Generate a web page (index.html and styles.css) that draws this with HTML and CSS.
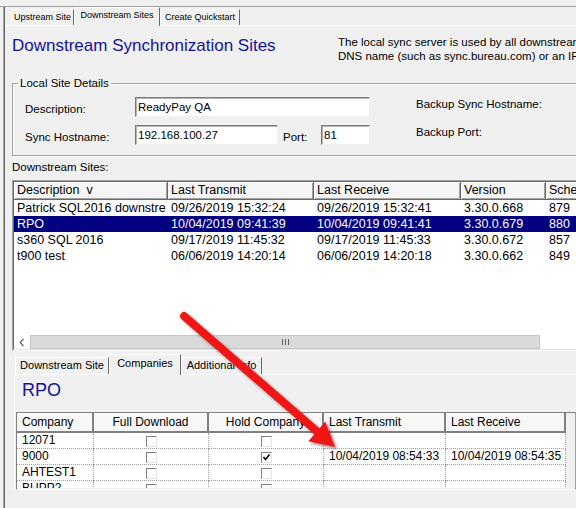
FILE: index.html
```html
<!DOCTYPE html>
<html>
<head>
<meta charset="utf-8">
<link rel="stylesheet" href="styles.css">
</head>
<body>
<div class="app">
  <div class="topline"></div>
  <div class="frame"><div class="frame-inner">
    <div class="tabstrip">
      <div class="tab t-up">Upstream Site</div>
      <div class="tab sel t-down">Downstream Sites</div>
      <div class="tab t-create">Create Quickstart</div>
    </div>
    <div class="page">
      <div class="hdr">
        <h1 class="title">Downstream Synchronization Sites</h1>
        <p class="info">The local sync server is used by all downstream<br>DNS name (such as sync.bureau.com) or an IP</p>
      </div>
      <fieldset class="group">
        <legend class="legend">Local Site Details</legend>
        <div class="frow">
          <span class="flabel">Description:</span>
          <span class="input w-desc">ReadyPay QA</span>
          <span class="blabel">Backup Sync Hostname:</span>
        </div>
        <div class="frow">
          <span class="flabel">Sync Hostname:</span>
          <span class="input w-host">192.168.100.27</span>
          <span class="flabel plabel">Port:</span>
          <span class="input w-port">81</span>
          <span class="blabel">Backup Port:</span>
        </div>
      </fieldset>
      <div class="slabel">Downstream Sites:</div>
      <div class="lv"><div class="lv-in">
        <div class="lv-row lv-head">
          <div class="c c1">Description&nbsp; v</div>
          <div class="c c2">Last Transmit</div>
          <div class="c c3">Last Receive</div>
          <div class="c c4">Version</div>
          <div class="c c5">Sche</div>
        </div>
        <div class="lv-body">
          <div class="lv-row">
            <div class="c c1">Patrick SQL2016 downstre</div>
            <div class="c c2">09/26/2019 15:32:24</div>
            <div class="c c3">09/26/2019 15:32:41</div>
            <div class="c c4">3.30.0.668</div>
            <div class="c c5">879</div>
          </div>
          <div class="lv-row sel">
            <div class="c c1">RPO</div>
            <div class="c c2">10/04/2019 09:41:39</div>
            <div class="c c3">10/04/2019 09:41:41</div>
            <div class="c c4">3.30.0.679</div>
            <div class="c c5">880</div>
          </div>
          <div class="lv-row">
            <div class="c c1">s360 SQL 2016</div>
            <div class="c c2">09/17/2019 11:45:32</div>
            <div class="c c3">09/17/2019 11:45:33</div>
            <div class="c c4">3.30.0.672</div>
            <div class="c c5">857</div>
          </div>
          <div class="lv-row">
            <div class="c c1">t900 test</div>
            <div class="c c2">06/06/2019 14:20:14</div>
            <div class="c c3">06/06/2019 14:20:18</div>
            <div class="c c4">3.30.0.662</div>
            <div class="c c5">849</div>
          </div>
        </div>
        <div class="hscroll">
          <div class="sb-btn"><svg width="6" height="9" viewBox="0 0 6 9"><path d="M4.5 1 L1.2 4.5 L4.5 8" fill="none" stroke="#606060" stroke-width="1.2"/></svg></div>
          <div class="sb-thumb"><svg width="7" height="6" viewBox="0 0 7 6"><rect x="0" y="0" width="1" height="6" fill="#606060"/><rect x="3" y="0" width="1" height="6" fill="#606060"/><rect x="6" y="0" width="1" height="6" fill="#606060"/></svg></div>
        </div>
      </div></div>
      <div class="subtabs">
        <div class="stab s1">Downstream Site</div>
        <div class="stab sel s2">Companies</div>
        <div class="stab s3">Additional Info</div>
      </div>
      <div class="subpage">
        <div class="rpo">RPO</div>
        <div class="grid">
          <div class="gh">
            <div class="gc g1 hl">Company</div>
            <div class="gc g2 hc">Full Download</div>
            <div class="gc g3 hc">Hold Company</div>
            <div class="gc g4 hl">Last Transmit</div>
            <div class="gc g5 hl">Last Receive</div>
          </div>
          <div class="gbody">
            <div class="gr">
              <div class="gc g1">12071</div>
              <div class="gc g2 cbc"><span class="cb"></span></div>
              <div class="gc g3 cbc"><span class="cb"></span></div>
              <div class="gc g4"></div>
              <div class="gc g5"></div>
            </div>
            <div class="gr">
              <div class="gc g1">9000</div>
              <div class="gc g2 cbc"><span class="cb"></span></div>
              <div class="gc g3 cbc"><span class="cb"><svg width="9" height="9" viewBox="0 0 9 9"><path d="M1.5 4 L3.5 6.5 L7.5 1.5" fill="none" stroke="#000" stroke-width="1.6"/></svg></span></div>
              <div class="gc g4">10/04/2019 08:54:33</div>
              <div class="gc g5">10/04/2019 08:54:35</div>
            </div>
            <div class="gr">
              <div class="gc g1">AHTEST1</div>
              <div class="gc g2 cbc"><span class="cb"></span></div>
              <div class="gc g3 cbc"><span class="cb"></span></div>
              <div class="gc g4"></div>
              <div class="gc g5"></div>
            </div>
            <div class="gr">
              <div class="gc g1">BUPP2</div>
              <div class="gc g2 cbc"><span class="cb"></span></div>
              <div class="gc g3 cbc"><span class="cb"></span></div>
              <div class="gc g4"></div>
              <div class="gc g5"></div>
            </div>
          </div>
        </div>
      </div>
    </div>
  </div></div>
</div>
<svg class="arrow" width="576" height="508" viewBox="0 0 576 508" aria-hidden="true">
  <defs>
    <filter id="sh" x="-20%" y="-20%" width="140%" height="140%">
      <feDropShadow dx="2" dy="2" stdDeviation="1.5" flood-color="#000" flood-opacity="0.45"/>
    </filter>
  </defs>
  <g filter="url(#sh)">
    <line x1="184" y1="316" x2="320" y2="434" stroke="#f01414" stroke-width="8" stroke-linecap="round"/>
    <polygon points="335,447 325.3,421.4 308.3,441.2" fill="#f01414"/>
  </g>
</svg>
</body>
</html>
```

FILE: styles.css
```css
* { box-sizing: border-box; }
html, body { margin: 0; }
body {
  width: 576px;
  height: 508px;
  overflow: hidden;
  background: #f0f0f0;
  font-family: "Liberation Sans", Arial, sans-serif;
  color: #000;
  position: relative;
}
.app { width: 576px; overflow: hidden; }
.topline { height: 7px; border-bottom: 1px solid #a0a0a0; }
.frame { margin-left: 3px; border-left: 1px solid #a0a0a0; height: 501px; }
.frame-inner { border-left: 1px solid #696969; height: 100%; }

.tabstrip { display: flex; align-items: flex-end; height: 18px; padding-left: 6px; }
.tab {
  height: 16px;
  border: 1px solid;
  border-bottom: 0;
  border-color: #fff #696969 #fff #fff;
  font-size: 9px;
  line-height: 14px;
  text-align: center;
  white-space: nowrap;
  background: #f0f0f0;
  flex: none;
}
.tab.sel { height: 19px; margin-bottom: -1px; line-height: 15px; }
.t-up { width: 63px; }
.t-down { width: 86px; }
.t-create { width: 80px; }

.page { border-top: 1px solid #fff; padding: 10px 0 0 7px; width: 675px; }
.hdr { display: grid; grid-template-columns: 326px auto; height: 41px; }
.title {
  margin: 0;
  font-size: 17px;
  line-height: 20px;
  font-weight: normal;
  color: #14149a;
  white-space: nowrap;
}
.info { margin: 0; font-size: 11.5px; line-height: 13.5px; white-space: nowrap; }

.group {
  margin: 0;
  padding: 0 12px 10px 12px;
  border: 1px solid #a0a0a0;
  box-shadow: 1px 1px 0 #fff, inset 1px 1px 0 #fff;
  min-width: 0;
}
.legend { font-size: 11.5px; line-height: 13px; padding: 0 2px; margin-left: -7px; }
.frow { display: flex; height: 20px; margin-top: 7px; }
.frow + .frow { margin-top: 8px; }
.flabel { width: 110px; flex: none; padding-top: 5px; font-size: 11.5px; line-height: 14px; white-space: nowrap; }
.plabel { width: 43px; padding-left: 5px; }
.input {
  height: 20px;
  flex: none;
  border: 1px solid;
  border-color: #7a7a7a #f0f0f0 #f0f0f0 #7a7a7a;
  box-shadow: inset 1px 1px 0 #b4b4b4;
  background: #fff;
  font-size: 11.5px;
  line-height: 18px;
  padding-left: 2px;
  white-space: nowrap;
}
.w-desc { width: 235px; }
.w-host { width: 143px; }
.w-port { width: 49px; }
.blabel { margin-left: 46px; font-size: 11.5px; line-height: 14px; white-space: nowrap; }

.slabel { margin-top: 4px; height: 14px; font-size: 11.5px; line-height: 14px; }

.lv {
  margin-top: 6px;
  width: 640px;
  border: 1px solid;
  border-color: #a0a0a0 #fff #fff #a0a0a0;
}
.lv-in { border: 1px solid; border-color: #696969 #e3e3e3 #e3e3e3 #696969; }
.lv-row { display: flex; height: 16px; font-size: 12.5px; line-height: 16px; white-space: nowrap; }
.lv-head { height: 18px; line-height: 17px; }
.lv-head .c {
  background: #f5f5f5;
  border-right: 1px solid #696969;
  border-bottom: 1px solid #696969;
  box-shadow: inset 1px 1px 0 #fff, inset -1px -1px 0 #a0a0a0;
}
.c { overflow: hidden; padding-left: 3px; flex: none; }
.c1 { width: 154px; }
.c2 { width: 146px; }
.c3 { width: 147px; }
.c4 { width: 85px; }
.c5 { width: 104px; }
.lv-body { height: 135px; background: #fff; }
.lv-row.sel { background: #000080; color: #fff; }

.hscroll { display: flex; height: 14px; background: #fff; }
.sb-btn { width: 16px; flex: none; display: flex; align-items: center; justify-content: center; }
.sb-thumb {
  width: 510px;
  flex: none;
  background: #dadada;
  border: 1px solid #c6c6c6;
  display: flex;
  align-items: center;
  justify-content: center;
}

.subtabs { display: flex; align-items: flex-end; height: 20px; margin: 3px 0 0 3px; }
.stab {
  height: 17px;
  flex: none;
  border: 1px solid;
  border-bottom: 0;
  border-color: #fff #696969 #fff #fff;
  font-size: 11px;
  line-height: 15px;
  text-align: center;
  white-space: nowrap;
  background: #f0f0f0;
}
.stab.sel { height: 21px; margin-bottom: -1px; line-height: 17px; }
.s1 { width: 94px; }
.s2 { width: 72px; }
.s3 { width: 81px; }

.subpage { margin-left: 2px; border-top: 1px solid #fff; border-left: 1px solid #fff; padding-top: 4px; }
.rpo { font-size: 18px; line-height: 22px; color: #14149a; padding-left: 7px; }

.grid {
  margin: 11px 0 0 1px;
  width: 560px;
  border-left: 1px solid #808080;
  border-top: 1px solid #808080;
  border-right: 1px solid #a0a0a0;
  border-bottom: 1px solid #fff;
  padding-bottom: 1px;
  background: #f0f0f0;
}
.gh { display: flex; height: 20px; }
.gc { flex: none; overflow: hidden; white-space: nowrap; }
.gh .gc {
  background: #f7f7f7;
  border-right: 2px solid #808080;
  border-bottom: 2px solid #808080;
  font-size: 12px;
  line-height: 18px;
}
.hl { padding-left: 5px; }
.hc { text-align: center; }
.g1 { width: 77px; }
.g2 { width: 115px; }
.g3 { width: 115px; }
.g4 { width: 122px; }
.g5 { width: 120px; }
.gbody { height: 55px; overflow: hidden; }
.gr { display: flex; height: 16px; }
.gr .gc {
  background: #fff;
  border-right: 1px dotted #a0a0a0;
  border-bottom: 1px dotted #a0a0a0;
  font-size: 12px;
  line-height: 15px;
  padding-left: 5px;
}
.gr .cbc { padding-left: 0; display: flex; justify-content: center; }
.cb {
  width: 11px;
  height: 11px;
  margin-top: 3px;
  border: 1px solid;
  border-color: #808080 #e3e3e3 #e3e3e3 #808080;
  background: #fff;
  display: block;
}
.cb svg { display: block; }

.arrow { position: absolute; left: 0; top: 0; pointer-events: none; }
```
